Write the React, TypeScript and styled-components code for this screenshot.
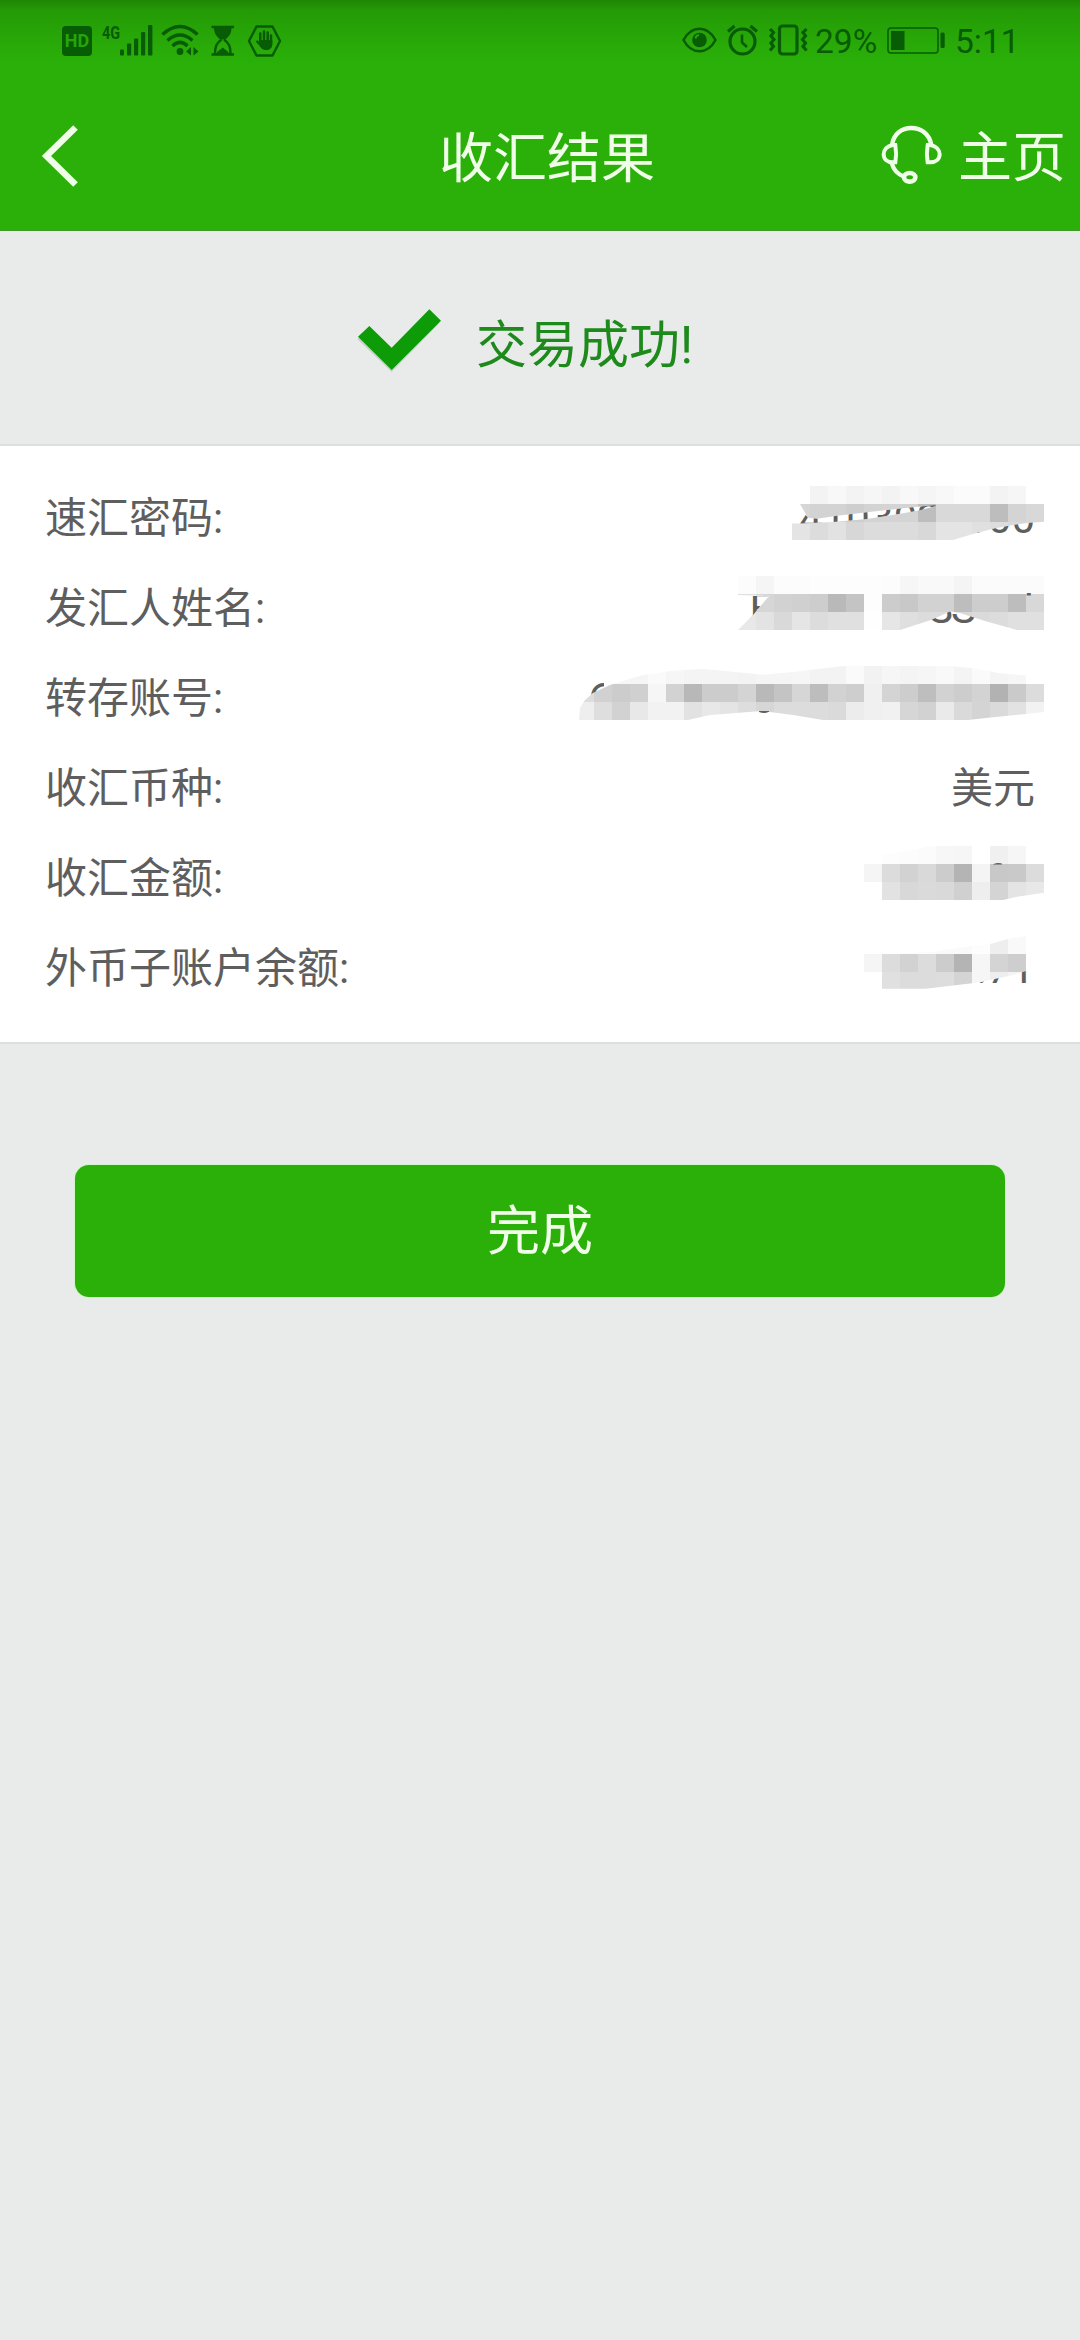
import React, { useId } from "react";
import styled, { createGlobalStyle } from "styled-components";

const GREEN = "#2ab009";
const STATUS_INK = "#075c05";
const PAGE = "#e8ebea";
const CELL = 18;

const GlobalStyle = createGlobalStyle`
  html, body { margin: 0; padding: 0; background: ${PAGE}; }
  * { box-sizing: border-box; }
  svg { display: block; flex: none; }
`;

const Screen = styled.div`
  width: 1080px;
  min-height: 2340px;
  display: flex;
  flex-direction: column;
  background: ${PAGE};
  font-family: Roboto, "Noto Sans CJK SC", sans-serif;
`;

const StatusBar = styled.div`
  height: 80px;
  padding: 0 62px 0 62px;
  display: flex;
  align-items: flex-start;
  justify-content: space-between;
  background: linear-gradient(#1f8504 0, #249a06 10px, #28a808 40px, ${GREEN} 64px);
  color: ${STATUS_INK};
`;

const StatusGroup = styled.div`
  display: flex;
  align-items: flex-start;
  padding-top: 24px;
`;

const StatusIcon = styled.svg<{ $gap?: number }>`
  margin-left: ${(p) => p.$gap ?? 0}px;
  height: 34px;
`;

const StatusText = styled.span<{ $gap: number; $width: number }>`
  margin-left: ${(p) => p.$gap}px;
  width: ${(p) => p.$width}px;
  font-size: 33.5px;
  line-height: 36px;
  white-space: nowrap;
`;

const HdBadge = styled.span`
  width: 30px;
  height: 30px;
  margin-top: 2px;
  border-radius: 4px;
  background: ${STATUS_INK};
  color: #27a508;
  font-size: 18px;
  font-weight: 700;
  line-height: 30px;
  text-align: center;
`;

const NetworkType = styled.span`
  width: 18px;
  margin-left: 10px;
  font-size: 19px;
  font-weight: 700;
  line-height: 17px;
  transform: scaleX(0.76);
  transform-origin: left;
`;

const NavBar = styled.header`
  height: 151px;
  display: grid;
  grid-template-columns: 200px 1fr 200px;
  align-items: center;
  background: ${GREEN};
  border-bottom: 1px solid #3f9a2a;
  color: #f0fee9;
  padding-bottom: 1px;
`;

const BackButton = styled.div`
  padding: 3px 0 0 40px;
`;

const NavTitle = styled.h1`
  margin: 0;
  padding: 10px 0 0 14px;
  font-size: 54px;
  font-weight: 400;
  line-height: 78px;
  text-align: center;
`;

const HomeLink = styled.div`
  display: flex;
  align-items: center;
  font-size: 54px;
  line-height: 78px;
  white-space: nowrap;
  gap: 15px;
  padding-left: 1px;
`;

const HomeText = styled.span`
  padding-top: 9px;
`;

const ResultBanner = styled.section`
  height: 215px;
  display: flex;
  align-items: flex-start;
  padding: 75px 0 0 354px;
  gap: 32px;
  color: #1f8a1c;
  font-size: 51px;
  line-height: 80px;
`;

const Details = styled.dl`
  height: 600px;
  margin: 0;
  padding: 26px 36px 0 45px;
  background: #fff;
  border: solid #dcdfde;
  border-width: 2px 0;
  margin-top: -2px;
`;

const DetailRow = styled.div`
  height: 90px;
  display: flex;
  align-items: center;
  justify-content: space-between;
  color: #5e5e5e;
  font-size: 42px;
  line-height: 88px;
`;

const Label = styled.dt`
  padding-top: 3px;
  white-space: nowrap;
`;

const Value = styled.dd<{ $inset?: boolean }>`
  margin: 0;
  padding: ${(p) => (p.$inset ? "3px 9px 0 0" : "0")};
`;

const Actions = styled.div`
  padding: 121px 75px 0;
`;

const DoneButton = styled.button`
  display: block;
  width: 100%;
  height: 132px;
  padding: 3px 0 0;
  border: 0;
  border-radius: 14px;
  background: ${GREEN};
  box-shadow: 0 0 0 1px #d3f3ca;
  color: #f0fee9;
  font: inherit;
  font-size: 53px;
  line-height: 129px;
`;

type Band = { y: number; x: number; tones: string };
type Mosaic = {
  left: number;
  top: number;
  cover: string;
  gaps: string;
  glyphs: { text: string; x: number }[];
  bands: Band[];
};

/* Each band is one line of square cells; a tone is the grey level in hex. */
const MOSAICS: Record<string, Mosaic> = {
  password: {
    left: 792,
    top: 472,
    cover:
      "M800 504H810V486H1026V504H1044V521.7L1030 522.7L1013 525L993 528.7L973 534L953 540H792V523.5H800L833 522L867 519L900 513.7L920 510.3L936 506V505L913 507.3L880 510.7L837 515.7L817 518.7L808 517.7Z",
    gaps: "M800 508L808 517.7L817 518.7L837 515.7L880 510.7L913 507.3L936 505V506L920 510.3L900 513.7L867 519L833 522L800 523.5ZM973 534L993 528.7L1013 525L1030 522.7L1044 521.7V540H973Z",
    glyphs: [{ text: "4103020100", x: 799 }],
    bands: [
      { y: 486, x: 810, tones: "f3 f8 f3 f6 f3 f8 f5 f8 fb fb f3 f6" },
      { y: 504, x: 792, tones: "d6 d3 d3 ce d3 d4 d4 be d9 d9 d9 bd d4 d8" },
      { y: 522, x: 792, tones: "e4 dc e2 d7 dc dc dc d8 e4 e4 e0 dd d9 d9" },
    ],
  },
  sender: {
    left: 738,
    top: 562,
    cover:
      "M738 576H1044V630H1017L985 621L960 613L950 611.5L931 620L900 630H738L748 620L758 609L769 596L738 595Z",
    gaps: "M738 596H768L758 609L749 620H738ZM921 623.5L931 620L950 611.5L960 613L985 621V630H921ZM1026 593H1034V595.5H1026Z",
    glyphs: [
      { text: "F", x: 749.5 },
      { text: "S", x: 928 },
      { text: "S", x: 951 },
      { text: "d", x: 1010 },
    ],
    bands: [
      { y: 576, x: 738, tones: "fc f5 fc fc fd fd fd fd fc f6 f9 f9 f4 fb fb fb fb" },
      { y: 594, x: 738, tones: "e0 d6 d2 d0 cd b9 c4 fd cc c8 d2 d2 bd cd cd bd d8" },
      { y: 612, x: 738, tones: "e8 e3 d9 e5 dc e0 e0 fe e6 df dc dc d8 da dc e0 e0" },
    ],
  },
  account: {
    left: 576,
    top: 652,
    cover:
      "M579 720L580 708L585 700L593 693L610 685L623 681L643 675L673 670.7L703 669L733 671.7L763 674.7L793 672L843 666L880 665.3H943L973 668.3L1000 673.3L1026 675.5V684H1044V712L1026 714L993 717.3L968 720H823L793 715L762 711L710 715L688 720Z",
    gaps: "M585 680H604L604 688L593 693L588 697H585ZM759 711L769 711V714H759Z",
    glyphs: [
      { text: "6", x: 588 },
      { text: "0", x: 752 },
    ],
    bands: [
      { y: 666, x: 594, tones: "f8 f6 f5 fa f6 f4 f4 f4 f3 f5 f5 f6 f3 f3 fa f2 f6 f4 f6 f9 f4 fa f4 f6" },
      { y: 684, x: 576, tones: "dd d1 cc d0 f6 d2 b8 cc cc d4 b9 c4 d6 bd d2 ce f0 d4 cd be d2 cd d3 b2 ca dc" },
      { y: 702, x: 576, tones: "ee de d2 e8 f2 f2 e2 e8 e4 dd d6 dc dc dc da ec f0 f1 d6 d2 ea da d4 da e2 f2" },
    ],
  },
  amount: {
    left: 864,
    top: 832,
    cover: "M864 864H882V855L933 846H1026V864H1044V892.7L1017 896.7L1003 900H882V882H864Z",
    gaps: "M993 862H1002V864.5H993Z",
    glyphs: [{ text: "0", x: 986.5 }],
    bands: [
      { y: 846, x: 882, tones: "fd fc fb f7 f6 ff f0 f6" },
      { y: 864, x: 864, tones: "f5 dc d2 d9 cc b4 f4 c8 c9 dc" },
      { y: 882, x: 882, tones: "e2 d8 da d9 d0 ee d4 e4 e8" },
    ],
  },
  balance: {
    left: 864,
    top: 922,
    cover:
      "M864 954H882L930 952L972 946L990 944L1008 939L1026 936V971L1013 975L990 980L972 983.3L926 988.7H882V972H864Z",
    gaps: "M977 983L990 980L1013 975L1026 971H1034V986H977Z",
    glyphs: [{ text: ".71", x: 976 }],
    bands: [
      { y: 936, x: 882, tones: "fd fc fb fa fa fd ee f9" },
      { y: 954, x: 864, tones: "f5 dc d2 dc cc b4 f6 d4 ce" },
      { y: 972, x: 882, tones: "e0 dc dc dd d4 f6 ee f4" },
    ],
  },
};

function Redacted({ data }: { data: Mosaic }) {
  const id = useId().replace(/[^a-zA-Z0-9]/g, "");
  const width = 1044 - data.left;
  return (
    <svg width={width} height={90} viewBox={`${data.left} ${data.top} ${width} 90`}>
      <defs>
        <clipPath id={`cover${id}`}>
          <path d={data.cover} />
        </clipPath>
        <clipPath id={`gaps${id}`}>
          <path d={data.gaps} />
        </clipPath>
      </defs>
      <g clipPath={`url(#cover${id})`} shapeRendering="crispEdges">
        {data.bands.flatMap((band) =>
          band.tones.split(" ").map((tone, i) => (
            <rect
              key={`${band.y}-${i}`}
              x={band.x + i * CELL}
              y={band.y}
              width={CELL}
              height={CELL}
              fill={`#${tone}${tone}${tone}`}
            />
          ))
        )}
      </g>
      <g clipPath={`url(#gaps${id})`} fill="#5e5e5e" fontSize={42}>
        {data.glyphs.map((glyph) => (
          <text key={glyph.x} x={glyph.x} y={data.top + 60.5}>
            {glyph.text}
          </text>
        ))}
      </g>
    </svg>
  );
}

const ROWS: { label: string; value?: string; mosaic?: string }[] = [
  { label: "速汇密码:", mosaic: "password" },
  { label: "发汇人姓名:", mosaic: "sender" },
  { label: "转存账号:", mosaic: "account" },
  { label: "收汇币种:", value: "美元" },
  { label: "收汇金额:", mosaic: "amount" },
  { label: "外币子账户余额:", mosaic: "balance" },
];

const Signal = () => (
  <StatusIcon width="33" viewBox="0 0 33 34" fill="currentColor">
    <rect x="0" y="25.5" width="4" height="6" rx="1" />
    <rect x="7" y="19.5" width="4.2" height="12" rx="1" />
    <rect x="14" y="14.5" width="4.2" height="17" rx="1" />
    <rect x="21" y="8" width="4.2" height="23.5" rx="1" />
    <rect x="28" y="1" width="4.4" height="30.5" rx="1" />
  </StatusIcon>
);

const Wifi = () => (
  <StatusIcon $gap={8} width="38" viewBox="0 0 38 34" fill="none" stroke="currentColor" strokeWidth="3.4">
    <path d="M1.500 10.500Q19 -5.500 36.500 10.500" />
    <path d="M6.500 16.500Q19 5.500 31.500 16.500" />
    <path d="M11.500 22Q19 14.800 26.500 22" />
    <circle cx="19" cy="27.500" r="3.400" fill="currentColor" stroke="none" />
    <path d="M30 23v8.500l-5-4zM32.500 23v8.500l5-4z" fill="currentColor" stroke="none" />
  </StatusIcon>
);

const Hourglass = () => (
  <StatusIcon $gap={12} width="24" viewBox="0 0 24 34" fill="none" stroke="currentColor">
    <path d="M0.500 3h22.500M0.500 30.500h22.500" strokeWidth="2.400" />
    <path d="M3 3h17.500c0 7-2.500 9.500-6.500 12.500h-4.500C5.500 12.500 3 10 3 3z" fill="currentColor" stroke="none" />
    <path d="M10.500 15.500C5.500 19 4 22.500 4 30M13 15.500c5 3.500 6.500 7 6.500 14.500" strokeWidth="2.400" />
    <path d="M5.500 30c.5-3 4-4 6.300-6.500 2.300 2.500 5.700 3.500 6.200 6.500z" fill="currentColor" stroke="none" />
  </StatusIcon>
);

const HandStop = () => (
  <StatusIcon $gap={12} width="35" viewBox="0 0 35 34" fill="none" stroke="currentColor" strokeLinecap="round">
    <path d="M9.500 2.500h16L33 17l-7.500 14.500h-16L2 17z" strokeWidth="2.400" strokeLinejoin="round" />
    <path d="M13.300 9.500V18M17 7.500V18M20.700 8.500V18M24 11.500V20" strokeWidth="2.500" />
    <path d="M12 16h13.300V20c0 4-2.500 6-6 6-3.800 0-5.300-2-7-4.500l-3.500-3.800c.8-1.800 2.300-1.200 3.200.2z" fill="currentColor" stroke="none" />
  </StatusIcon>
);

const Eye = () => (
  <StatusIcon width="35" viewBox="0 0 35 34" fill="none" stroke="currentColor">
    <path d="M1.500 16C9.500 1 25.500 1 33.500 16 25.500 31 9.500 31 1.500 16z" strokeWidth="2.500" strokeLinejoin="round" />
    <circle cx="17.500" cy="16" r="7.300" fill="currentColor" stroke="none" />
    <path d="M13.500 14.500a4 4 0 0 1 3.500-3.500" stroke="#27a508" strokeWidth="2" />
  </StatusIcon>
);

const Alarm = () => (
  <StatusIcon $gap={10} width="32" viewBox="0 0 32 34" fill="none" stroke="currentColor">
    <circle cx="15.500" cy="17.500" r="12.500" strokeWidth="3.200" />
    <path d="M1 7.500l6.500-5.500M30 7.500L23.500 2" strokeWidth="3" />
    <path d="M15 10.500v8l5 4.500" strokeWidth="2.600" />
  </StatusIcon>
);

const Vibrate = () => (
  <StatusIcon $gap={9} width="41" viewBox="0 0 41 34" fill="none" stroke="currentColor">
    <rect x="11.500" y="2" width="17.500" height="28" rx="3" strokeWidth="3.200" />
    <path d="M2 5l3.500 3.500L3 12l3 3.500L3 19l2.500 3.500L2 26.500M38.500 5L35 8.500l2.500 3.500-3 3.500 3 3.500-2.500 3.500 3.500 4" strokeWidth="3.100" />
  </StatusIcon>
);

const Battery = () => (
  <StatusIcon $gap={10} width="59" viewBox="0 0 59 34" fill="currentColor">
    <rect x="1" y="4" width="50" height="25" rx="3" fill="none" stroke="currentColor" strokeWidth="1.500" />
    <rect x="4" y="7" width="13.500" height="19" />
    <rect x="53.500" y="8.500" width="4.200" height="15.500" rx="1.500" />
  </StatusIcon>
);

const Headset = () => (
  <svg width="62" height="60" viewBox="120 80 186 180" fill="none" stroke="currentColor" strokeWidth="13">
    <path d="M153 140C158 106 182 89 211 89s54 17 60 51" />
    <path d="M163 140h-8c-17 3-27 14-27 28s10 24 27 24h8c3-17 3-35 0-52z" strokeWidth="12" />
    <path d="M260 140h8c17 3 28 14 28 28s-11 24-28 24h-8c-3-17-3-35 0-52z" strokeWidth="12" />
    <path d="M152 194c6 21 18 34 36 40" />
    <ellipse cx="206" cy="237" rx="17" ry="13" strokeWidth="14" />
  </svg>
);

export default function App() {
  return (
    <Screen>
      <GlobalStyle />
      <StatusBar>
        <StatusGroup>
          <HdBadge>HD</HdBadge>
          <NetworkType>4G</NetworkType>
          <Signal />
          <Wifi />
          <Hourglass />
          <HandStop />
        </StatusGroup>
        <StatusGroup>
          <Eye />
          <Alarm />
          <Vibrate />
          <StatusText $gap={6} $width={62}>29%</StatusText>
          <Battery />
          <StatusText $gap={9} $width={63}>5:11</StatusText>
        </StatusGroup>
      </StatusBar>
      <NavBar>
        <BackButton>
          <svg width="40" height="64" viewBox="0 0 40 64" fill="none" stroke="currentColor" strokeWidth="6.500">
            <path d="M35.500 3.500L6.500 32l29 28.500" />
          </svg>
        </BackButton>
        <NavTitle>收汇结果</NavTitle>
        <HomeLink>
          <Headset />
          <HomeText>主页</HomeText>
        </HomeLink>
      </NavBar>
      <ResultBanner>
        <svg width="90" height="68" viewBox="42 78 270 204">
          <path d="M52 177L88 145L158 210L268 96L298 130L155 276Z" fill="#c9cfca" />
          <path d="M54 170L88 138L155 203L268 88L303 122L155 270Z" fill="#0d9b08" />
        </svg>
        <span>交易成功!</span>
      </ResultBanner>
      <Details>
        {ROWS.map((row) => (
          <DetailRow key={row.label}>
            <Label>{row.label}</Label>
            <Value $inset={!row.mosaic}>
              {row.mosaic ? <Redacted data={MOSAICS[row.mosaic]} /> : row.value}
            </Value>
          </DetailRow>
        ))}
      </Details>
      <Actions>
        <DoneButton type="button">完成</DoneButton>
      </Actions>
    </Screen>
  );
}
